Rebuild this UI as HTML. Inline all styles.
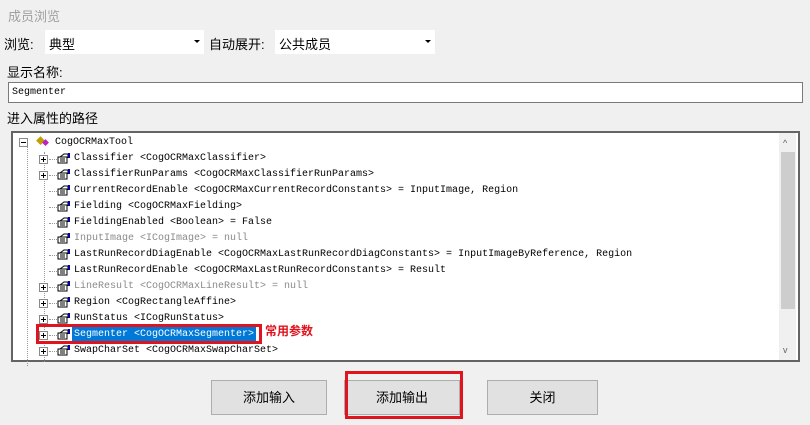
<!DOCTYPE html>
<html><head><meta charset="utf-8"><style>
*{margin:0;padding:0;box-sizing:border-box}
body{width:810px;height:425px;background:#f0f0f0;position:relative;overflow:hidden;font-family:"Liberation Sans","Noto Sans CJK SC",sans-serif;font-size:12px;color:#000}
.a{position:absolute}
.cb{background:#fff;height:24px;top:30px}
.arr{position:absolute;right:4px;top:10px;width:0;height:0;border-left:3px solid transparent;border-right:3px solid transparent;border-top:3px solid #000}
.tree{left:11px;top:131px;width:789px;height:231px;border:2px solid #646464;background:#fff}
.row{position:absolute;left:0;height:16px;font-family:"Liberation Mono","Noto Sans CJK SC",monospace;font-size:10px;line-height:16px;white-space:pre;color:#000}
.g{color:#8a8a8a}
.pl{position:absolute;width:9px;height:9px;border:1px solid #8a8a8a;background:#fff;left:27px}
.pl:before{content:"";position:absolute;left:1px;top:3px;width:5px;height:1px;background:#000}
.pl.p:after{content:"";position:absolute;left:3px;top:1px;width:1px;height:5px;background:#000}
.ic{position:absolute;left:44px;width:14px;height:11px}
.btn{top:380px;height:35px;background:#e1e1e1;border:1px solid #adadad;text-align:center;line-height:33px;font-size:13px}
</style></head><body>
<div class="a" style="left:8px;top:6px;color:#a0a0a0;font-size:13px">成员浏览</div>
<div class="a" style="left:4px;top:34px;font-size:13px">浏览:</div>
<div class="a cb" style="left:45px;width:159px"><span style="position:absolute;left:4px;top:4px;font-size:13px">典型</span><i class="arr"></i></div>
<div class="a" style="left:209px;top:34px;font-size:13px">自动展开:</div>
<div class="a cb" style="left:275px;width:160px"><span style="position:absolute;left:4px;top:4px;font-size:13px">公共成员</span><i class="arr"></i></div>
<div class="a" style="left:7px;top:62px;font-size:13px">显示名称:</div>
<div class="a" style="left:8px;top:82px;width:795px;height:21px;background:#fff;border:1px solid #7a7a7a;font-family:'Liberation Mono',monospace;font-size:10px;line-height:19px;padding-left:3px">Segmenter</div>
<div class="a" style="left:7px;top:108px;font-size:13px">进入属性的路径</div>
<div class="a tree">
<div class="a" style="left:766px;top:0;width:17px;height:227px;background:#f0f0f0"></div>
<div class="a" style="left:768px;top:19px;width:14px;height:157px;background:#cdcdcd"></div>
<div class="a" style="left:770px;top:5px;font-size:9px;color:#606060">^</div>
<div class="a" style="left:770px;top:212px;font-size:9px;color:#606060">v</div>
<div class="a" style="left:14px;top:13px;height:220px;border-left:1px dotted #999"></div>
<div class="a" style="left:31px;top:19px;height:210px;border-left:1px dotted #999"></div>
<div class="pl" style="left:6px;top:5px"></div>
<div class="a" style="left:23px;top:1px;color:#c0a000;font-size:9px">◆</div>
<div class="a" style="left:29px;top:5px;color:#c020c0;font-size:7px">◆</div>
<div class="row" style="top:2px;left:42px">CogOCRMaxTool</div>
<div id="rows"></div>
</div>
<script>
var R=[["Classifier <CogOCRMaxClassifier>",1,0],["ClassifierRunParams <CogOCRMaxClassifierRunParams>",1,0],["CurrentRecordEnable <CogOCRMaxCurrentRecordConstants> = InputImage, Region",0,0],["Fielding <CogOCRMaxFielding>",0,0],["FieldingEnabled <Boolean> = False",0,0],["InputImage <ICogImage> = null",0,1],["LastRunRecordDiagEnable <CogOCRMaxLastRunRecordDiagConstants> = InputImageByReference, Region",0,0],["LastRunRecordEnable <CogOCRMaxLastRunRecordConstants> = Result",0,0],["LineResult <CogOCRMaxLineResult> = null",1,1],["Region <CogRectangleAffine>",1,0],["RunStatus <ICogRunStatus>",1,0],["Segmenter <CogOCRMaxSegmenter>",1,0],["SwapCharSet <CogOCRMaxSwapCharSet>",1,0]];
var h="";R.forEach(function(r,i){var t=18+i*16;
if(r[1])h+='<div class="pl p" style="top:'+(t+4)+'px;left:26px"></div>';
h+='<div class="a" style="left:36px;top:'+(t+8)+'px;width:8px;border-top:1px dotted #999"></div>';
h+='<svg class="ic" style="top:'+(t+2)+'px" viewBox="0 0 14 11"><path d="M1 4h9v6H1z" fill="#fff" stroke="#000"/><path d="M3 6h5M3 8h5" stroke="#000"/><path d="M3 4l4-3h4v4" fill="none" stroke="#000"/><rect x="11" y="0" width="2" height="5" fill="#0000a0"/></svg>';
var sel=i==11;
h+='<div class="row'+(r[2]?' g':'')+'" style="top:'+t+'px;left:61px;'+(sel?'background:#0078d7;color:#fff;padding:0 2px;left:59px':'')+'">'+r[0].replace(/</g,'&lt;')+'</div>';});
document.getElementById('rows').innerHTML=h;
</script>
<div class="a" style="left:36px;top:324px;width:226px;height:20px;border:3px solid #e0141e"></div>
<div class="a" style="left:265px;top:322px;color:#e0141e;font-weight:bold;font-size:12px">常用参数</div>
<div class="a btn" style="left:211px;width:116px">添加输入</div>
<div class="a btn" style="left:344px;width:116px">添加输出</div>
<div class="a" style="left:345px;top:371px;width:118px;height:48px;border:3px solid #e0141e"></div>
<div class="a btn" style="left:487px;width:111px">关闭</div>
</body></html>
